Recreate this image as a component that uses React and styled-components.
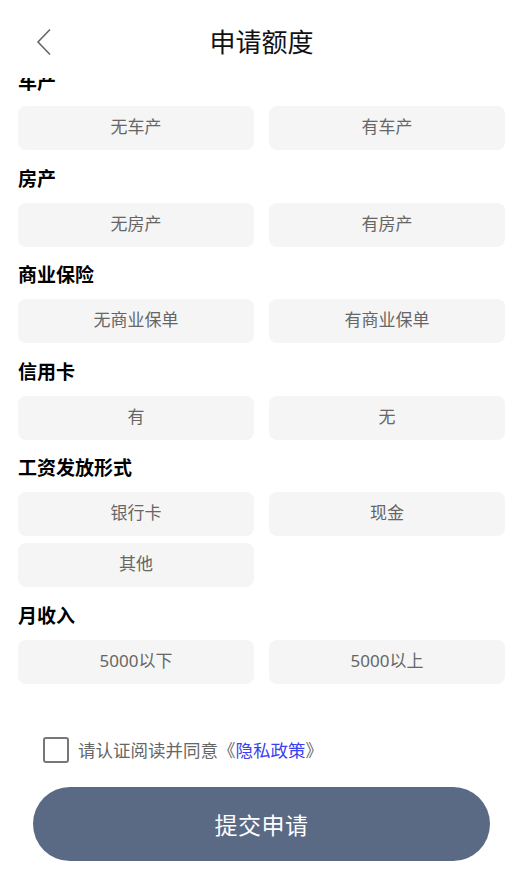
import React, { useState } from 'react';
import styled, { createGlobalStyle } from 'styled-components';

const GlobalStyle = createGlobalStyle`
  html, body {
    margin: 0;
    padding: 0;
    background: #fff;
  }
  body {
    font-family: "Noto Sans", "Noto Sans CJK SC", sans-serif;
  }
  * { box-sizing: border-box; }
`;

const Page = styled.div`
  width: 516px;
  height: 893px;
  display: flex;
  flex-direction: column;
  background: #fff;
  overflow: hidden;
`;

const Header = styled.div`
  height: 78px;
  flex: none;
  display: grid;
  grid-template-columns: 1fr auto 1fr;
  align-items: center;
  padding-left: 33px;
  background: #fff;
`;

const Back = styled.button`
  justify-self: start;
  width: 22px;
  height: 30px;
  padding: 0;
  border: 0;
  background: none;
  display: flex;
  align-items: center;
  justify-content: center;
  margin-top: 6px;
`;

const Title = styled.h1`
  margin: 6px 0 0 -26px;
  font-size: 26px;
  font-weight: 400;
  color: #111;
  line-height: 34px;
`;

const Body = styled.div`
  overflow: hidden;
  flex: none;
`;

const Form = styled.div`
  margin-top: -8px;
  padding: 0 11px 0 18px;
`;

const Section = styled.div`
  & + & {
    margin-top: 16.5px;
  }
`;

const Label = styled.div`
  height: 24px;
  line-height: 24px;
  font-size: 19px;
  font-weight: 700;
  color: #000;
  margin-bottom: 12px;
`;

const Options = styled.div`
  display: grid;
  grid-template-columns: 236px 236px;
  column-gap: 15px;
  row-gap: 7px;
`;

const Option = styled.button`
  height: 44px;
  border: 0;
  border-radius: 8px;
  background: ${p => (p.$active ? '#e6ebf3' : '#f5f5f5')};
  color: ${p => (p.$active ? '#5a6984' : '#666')};
  font-family: inherit;
  font-size: 17px;
  line-height: 42px;
  padding: 0 0 2px;
  cursor: pointer;
`;

const Footer = styled.div`
  padding-top: 53px;
`;

const Agree = styled.label`
  display: flex;
  align-items: center;
  height: 26px;
  margin-left: 43px;
  font-family: "Noto Sans CJK SC", sans-serif;
  font-size: 17.5px;
  color: #666;
  cursor: pointer;
`;

const Box = styled.span`
  width: 26px;
  height: 26px;
  border: 2.5px solid #777;
  border-radius: 3px;
  margin-right: 9px;
  display: flex;
  align-items: center;
  justify-content: center;
  color: #5a6984;
  font-size: 16px;
`;

const Link = styled.span`
  color: #3a3ff0;
`;

const Submit = styled.button`
  display: block;
  width: 457px;
  height: 74px;
  margin: 24px 0 0 33px;
  border: 0;
  border-radius: 37px;
  background: #5a6984;
  color: #fff;
  font-family: inherit;
  font-size: 23px;
  letter-spacing: 0.5px;
`;

const sections = [
  { title: '车产', options: ['无车产', '有车产'] },
  { title: '房产', options: ['无房产', '有房产'] },
  { title: '商业保险', options: ['无商业保单', '有商业保单'] },
  { title: '信用卡', options: ['有', '无'] },
  { title: '工资发放形式', options: ['银行卡', '现金', '其他'] },
  { title: '月收入', options: ['5000以下', '5000以上'] },
];

const App = () => {
  const [picked, setPicked] = useState({});
  const [agreed, setAgreed] = useState(false);

  return (
    <Page>
      <GlobalStyle />
      <Header>
        <Back aria-label="返回">
          <svg width="16" height="28" viewBox="0 0 16 28">
            <path d="M14 1.5 L2 14 L14 26.5" fill="none" stroke="#666" strokeWidth="1.6" />
          </svg>
        </Back>
        <Title>申请额度</Title>
        <span />
      </Header>
      <Body>
        <Form>
          {sections.map(s => (
            <Section key={s.title}>
              <Label>{s.title}</Label>
              <Options>
                {s.options.map(o => (
                  <Option
                    key={o}
                    $active={picked[s.title] === o}
                    onClick={() => setPicked({ ...picked, [s.title]: o })}
                  >
                    {o}
                  </Option>
                ))}
              </Options>
            </Section>
          ))}
        </Form>
      </Body>
      <Footer>
        <Agree onClick={() => setAgreed(!agreed)}>
          <Box>{agreed ? '✓' : null}</Box>
          请认证阅读并同意《<Link>隐私政策</Link>》
        </Agree>
        <Submit>提交申请</Submit>
      </Footer>
    </Page>
  );
};

export default App;
